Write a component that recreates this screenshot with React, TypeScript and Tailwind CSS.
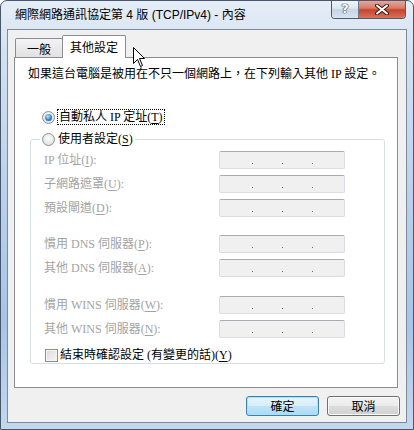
import React from "react";

const serif = "font-['Liberation_Serif','Noto_Sans_CJK_TC',serif]";

const Key = ({ c }: { c: string }) => (
  <>
    (<span className="underline underline-offset-[2px]">{c}</span>)
  </>
);

const Radio = ({ on }: { on?: boolean }) => (
  <span className="flex h-[13px] w-[13px] shrink-0 items-center justify-center rounded-full border border-[#8e9091] bg-[radial-gradient(circle_at_50%_40%,#ffffff,#e4e4e4_65%,#cfcfcf)]">
    {on && (
      <span className="h-[7px] w-[7px] rounded-full bg-[radial-gradient(circle_at_40%_35%,#bfe6ff,#3585c6_55%,#12416f)]" />
    )}
  </span>
);

const IpBox = () => (
  <div className="flex h-[18px] w-[126px] items-end justify-between rounded-[2px] border border-[#dadde2] border-t-[#a7aab0] bg-[#f0f0f0] pb-[4px] pl-[32px] pr-[31px]">
    <span className="h-[1px] w-[1px] bg-[#6a6a6a]" />
    <span className="h-[1px] w-[1px] bg-[#6a6a6a]" />
    <span className="h-[1px] w-[1px] bg-[#6a6a6a]" />
  </div>
);

const Field = ({ label }: { label: React.ReactNode }) => (
  <div className="flex h-[18px] items-center">
    <span className="w-[175px] text-[#a3a3a3]">{label}</span>
    <IpBox />
  </div>
);

export default function App() {
  return (
    <div className="relative flex h-[430px] w-[414px] flex-col overflow-hidden rounded-t-[7px] border border-[#47586c] bg-[linear-gradient(180deg,#e6eef7_0%,#d3e1f1_12%,#b9d1ec_45%,#a7c5e7_75%,#c3d8ef_100%)] px-[6px] pb-[6px] text-[12px] leading-[16px] text-black">
      {/* Title bar */}
      <div className="flex h-[28px] items-start">
        <div className="flex-1 pl-[8px] pt-[6px] font-['Liberation_Sans','Noto_Sans_CJK_TC',sans-serif] text-[12px] leading-[16px]">
          網際網路通訊協定第 4 版 (TCP/IPv4) - 內容
        </div>
        <div className="-mt-px mr-[1px] flex h-[19px] overflow-hidden rounded-b-[4px] border border-t-0 border-[#4b5c70]">
          <div className="flex w-[27px] items-center justify-center border-r border-[#6b7c90] bg-[linear-gradient(180deg,#f1f5fa_0%,#dfe8f2_45%,#c6d5e6_55%,#d6e3f1_100%)] font-['DejaVu_Sans',sans-serif] text-[13px] font-bold text-white [text-shadow:0_0_1px_#27384c,0_0_1px_#27384c,0_0_1px_#27384c]">
            ?
          </div>
          <div className="flex w-[46px] items-center justify-center bg-[linear-gradient(180deg,#e8ada0_0%,#d77c68_45%,#c6432c_55%,#d8735a_100%)]">
            <svg width="14" height="11" viewBox="0 0 14 11">
              <path d="M2 1.5 L12 9.5 M12 1.5 L2 9.5" stroke="#3d1f1a" strokeWidth="4" strokeLinecap="round" />
              <path d="M2 1.5 L12 9.5 M12 1.5 L2 9.5" stroke="#ffffff" strokeWidth="2" strokeLinecap="round" />
            </svg>
          </div>
        </div>
      </div>

      {/* Client area */}
      <div className="flex flex-1 flex-col border border-[#7d8a99] bg-[#f0f0f0] pt-[5px]">
        {/* Tabs */}
        <div className="ml-[7px] flex h-[22px] items-end font-['Noto_Sans_CJK_TC',sans-serif]">
          <div className="flex h-[19px] w-[48px] items-center justify-center rounded-t-[2px] border border-b-0 border-[#898c95] bg-[linear-gradient(180deg,#f3f3f3,#e1e1e1)] pt-[2px]">
            一般
          </div>
          <div className="relative z-10 -mb-px -ml-px flex h-[23px] w-[64px] items-start justify-center rounded-t-[2px] border border-b-0 border-[#898c95] bg-white pt-[3px]">
            其他設定
          </div>
        </div>

        {/* Tab panel */}
        <div className={`ml-[6px] mr-[8px] flex h-[331px] flex-col border border-[#898c95] bg-white ${serif}`}>
          <p className="ml-[13px] mt-[8px] h-[16px]">
            如果這台電腦是被用在不只一個網路上，在下列輸入其他 IP 設定。
          </p>

          <div className="ml-[27px] mt-[27px] flex h-[16px] items-center">
            <Radio on />
            <span className="ml-[2px] border border-dotted border-black pl-[1px] pr-[1px] leading-[14px]">
              自動私人 IP 定址<Key c="T" />
            </span>
          </div>

          <fieldset className="ml-[15px] mr-[12px] mt-[6px] rounded-[3px] border border-[#d5dfe5]">
            <legend className="ml-[9px] px-[2px]">
              <span className="flex h-[16px] items-center">
                <Radio />
                <span className="ml-[3px]">
                  使用者設定<Key c="S" />
                </span>
              </span>
            </legend>
            <div className="flex flex-col pl-[13px] pt-[4px]">
              <div className="flex flex-col gap-[6px]">
                <Field label={<>IP 位址<Key c="I" />:</>} />
                <Field label={<>子網路遮罩<Key c="U" />:</>} />
                <Field label={<>預設閘道<Key c="D" />:</>} />
              </div>
              <div className="mt-[18px] flex flex-col gap-[6px]">
                <Field label={<>慣用 DNS 伺服器<Key c="P" />:</>} />
                <Field label={<>其他 DNS 伺服器<Key c="A" />:</>} />
              </div>
              <div className="mt-[19px] flex flex-col gap-[6px]">
                <Field label={<>慣用 WINS 伺服器<Key c="W" />:</>} />
                <Field label={<>其他 WINS 伺服器<Key c="N" />:</>} />
              </div>
              <div className="mt-[9px] flex h-[16px] items-center">
                <span className="ml-[1px] h-[13px] w-[13px] border border-[#8e8f8f] bg-[linear-gradient(135deg,#d9d9d9,#f7f7f7)] shadow-[inset_0_0_0_1px_#f4f4f4]" />
                <span className="ml-[2px]">
                  結束時確認設定 (有變更的話)<Key c="Y" />
                </span>
              </div>
            </div>
          </fieldset>
        </div>

        {/* Buttons */}
        <div className="mr-[6px] mt-[8px] flex justify-end gap-[8px] font-['Noto_Sans_CJK_TC',sans-serif]">
          <button className="flex h-[20px] w-[73px] items-center justify-center rounded-[3px] border border-[#3c7fb1] bg-[linear-gradient(180deg,#e6f4fc_0%,#d6eefb_50%,#bfe4f8_50%,#acdaf3_100%)] text-[12px] leading-[16px] shadow-[inset_0_0_0_1px_#a9e1f7]">
            確定
          </button>
          <button className="flex h-[20px] w-[73px] items-center justify-center rounded-[3px] border border-[#707070] bg-[linear-gradient(180deg,#f3f3f3_0%,#ebebeb_50%,#dddddd_50%,#d0d0d0_100%)] text-[12px] leading-[16px] shadow-[inset_0_0_0_1px_#fbfbfb]">
            取消
          </button>
        </div>
      </div>

      {/* Mouse pointer */}
      <svg className="absolute left-[132px] top-[46px]" width="13" height="21" viewBox="0 0 13 21">
        <path d="M0.5 0.5 L0.5 16.5 L4.5 12.5 L7.5 19.5 L9.5 18.5 L6.5 11.5 L11.5 11.5 Z" fill="#ffffff" stroke="#000000" strokeWidth="1" strokeLinejoin="miter" />
      </svg>
    </div>
  );
}
